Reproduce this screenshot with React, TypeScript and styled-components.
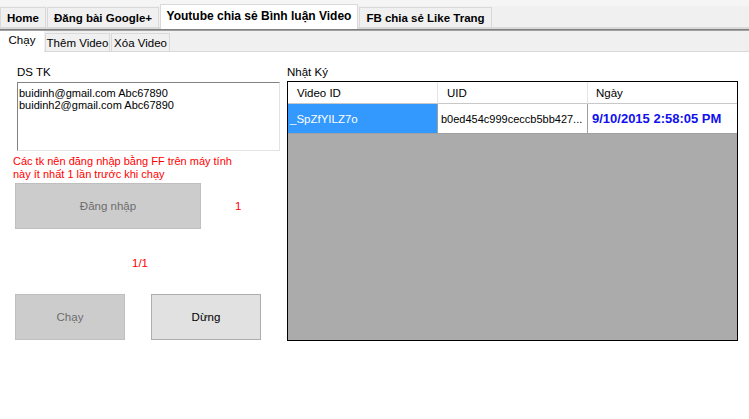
import React from "react";
import styled, { createGlobalStyle } from "styled-components";

const Global = createGlobalStyle`
  html, body { margin: 0; padding: 0; background: #ffffff; }
  body { font-family: "Liberation Sans", Arial, sans-serif; font-size: 11px; color: #000; }
  * { box-sizing: border-box; }
`;

const Page = styled.div`
  width: 749px;
  height: 419px;
  overflow: hidden;
  background: #fff;
`;

const TopStrip = styled.div`
  height: 6px;
  background: #f5f5f5;
`;

const MainTabRow = styled.div`
  height: 23px;
  background: #f0f0f0;
  display: flex;
  align-items: flex-end;
  border-bottom: 2px solid #d9d9d9;
  position: relative;
`;

const MainTab = styled.div<{ $w: number; $active?: boolean }>`
  width: ${(p) => p.$w}px;
  height: ${(p) => (p.$active ? 25 : 20)}px;
  margin-bottom: ${(p) => (p.$active ? -2 : 0)}px;
  background: ${(p) => (p.$active ? "#ffffff" : "#f0f0f0")};
  border: 1px solid #d9d9d9;
  border-bottom: none;
  margin-right: 1px;
  display: flex;
  align-items: center;
  justify-content: center;
  font-weight: bold;
  font-size: ${(p) => (p.$active ? 12 : 11.5)}px;
  padding-bottom: ${(p) => (p.$active ? 3 : 0)}px;
  white-space: nowrap;
  position: relative;
  z-index: ${(p) => (p.$active ? 2 : 1)};
`;

const Divider = styled.div`
  height: 2px;
  border-top: 1px solid #808080;
  border-bottom: 1px solid #a0a0a0;
  position: relative;
  z-index: 3;
`;

const SubTabRow = styled.div`
  height: 21px;
  background: #f0f0f0;
  display: flex;
  align-items: flex-end;
  border-bottom: 1px solid #d9d9d9;
`;

const SubTab = styled.div<{ $w: number; $active?: boolean }>`
  width: ${(p) => p.$w}px;
  height: ${(p) => (p.$active ? 22 : 18)}px;
  margin-bottom: ${(p) => (p.$active ? -1 : 0)}px;
  background: ${(p) => (p.$active ? "#ffffff" : "#f0f0f0")};
  border: 1px solid ${(p) => (p.$active ? "#ffffff" : "#d9d9d9")};
  border-bottom: none;
  margin-right: 1px;
  display: flex;
  align-items: center;
  justify-content: center;
  padding-bottom: ${(p) => (p.$active ? 4 : 0)}px;
  font-size: 11.5px;
  white-space: nowrap;
`;

const Content = styled.div`
  display: flex;
  padding-left: 13px;
`;

const LeftCol = styled.div`
  width: 267px;
  display: flex;
  flex-direction: column;
`;

const RightCol = styled.div`
  margin-left: 7px;
  width: 451px;
  display: flex;
  flex-direction: column;
`;

const Label = styled.div<{ $indent?: number }>`
  margin-top: 13px;
  margin-left: ${(p) => p.$indent ?? 0}px;
  line-height: 14px;
  height: 14px;
  font-size: 11.5px;
`;

const TextBox = styled.div`
  margin-top: 3px;
  margin-left: 4px;
  width: 263px;
  height: 69px;
  border: 1px solid;
  border-color: #828282 #e3e3e3 #e3e3e3 #828282;
  padding: 4px 1px;
  line-height: 12px;
  font-size: 11px;
`;

const Note = styled.div`
  margin-top: 4px;
  color: #ff0000;
  line-height: 13px;
  font-size: 11px;
`;

const ButtonRow = styled.div<{ $top: number; $gap: number }>`
  margin-top: ${(p) => p.$top}px;
  margin-left: 2px;
  display: flex;
  align-items: center;
  gap: ${(p) => p.$gap}px;
`;

const WinButton = styled.div<{ $w: number; $disabled?: boolean }>`
  width: ${(p) => p.$w}px;
  height: 46px;
  background: ${(p) => (p.$disabled ? "#cccccc" : "#e1e1e1")};
  border: 1px solid ${(p) => (p.$disabled ? "#bfbfbf" : "#adadad")};
  color: ${(p) => (p.$disabled ? "#6d6d6d" : "#000")};
  display: flex;
  align-items: center;
  justify-content: center;
  font-size: 11.5px;
  font-weight: normal;
  padding-bottom: 1px;
`;

const Counter = styled.div<{ $top?: number; $indent?: number }>`
  color: #ff0000;
  font-size: 11.5px;
  line-height: 13px;
  margin-top: ${(p) => p.$top ?? 0}px;
  margin-left: ${(p) => p.$indent ?? 0}px;
`;

const Grid = styled.div`
  margin-top: 2px;
  width: 451px;
  height: 260px;
  border: 1px solid #000;
  background: #ababab;
  display: flex;
  flex-direction: column;
`;

const GridRow = styled.div<{ $h: number }>`
  display: grid;
  grid-template-columns: 150px 150px 1fr;
  height: ${(p) => p.$h}px;
`;

const HeadCell = styled.div<{ $pad: number }>`
  background: #fff;
  border-right: 1px solid #e5e5e5;
  border-bottom: 1px solid #c8c8c8;
  display: flex;
  align-items: center;
  padding-left: ${(p) => p.$pad}px;
  font-size: 11.5px;
  &:last-child { border-right: none; }
`;

const Cell = styled.div<{ $pad: number; $selected?: boolean; $strong?: boolean; $size?: number }>`
  background: ${(p) => (p.$selected ? "#3399ff" : "#fff")};
  color: ${(p) => (p.$selected ? "#fff" : p.$strong ? "#1010f0" : "#000")};
  font-weight: ${(p) => (p.$strong ? "bold" : "normal")};
  font-size: ${(p) => p.$size ?? 11.5}px;
  border-right: 1px solid #a0a0a0;
  border-bottom: 1px solid #a0a0a0;
  display: flex;
  align-items: center;
  padding-left: ${(p) => p.$pad}px;
  white-space: nowrap;
  &:last-child { border-right: none; }
`;

export default function App() {
  return (
    <Page>
      <Global />
      <TopStrip />
      <MainTabRow>
        <MainTab $w={46}>Home</MainTab>
        <MainTab $w={112}>Đăng bài Google+</MainTab>
        <MainTab $w={198} $active>Youtube chia sẻ Bình luận Video</MainTab>
        <MainTab $w={133}>FB chia sẻ Like Trang</MainTab>
      </MainTabRow>
      <Divider />
      <SubTabRow>
        <SubTab $w={44} $active>Chạy</SubTab>
        <SubTab $w={65}>Thêm Video</SubTab>
        <SubTab $w={59}>Xóa Video</SubTab>
      </SubTabRow>
      <Content>
        <LeftCol>
          <Label $indent={4}>DS TK</Label>
          <TextBox>
            buidinh@gmail.com Abc67890
            <br />
            buidinh2@gmail.com Abc67890
          </TextBox>
          <Note>
            Các tk nên đăng nhập bằng FF trên máy tính
            <br />
            này ít nhất 1 lần trước khi chạy
          </Note>
          <ButtonRow $top={2} $gap={34}>
            <WinButton $w={186} $disabled>Đăng nhập</WinButton>
            <Counter>1</Counter>
          </ButtonRow>
          <Counter $top={28} $indent={119}>1/1</Counter>
          <ButtonRow $top={24} $gap={26}>
            <WinButton $w={110} $disabled>Chạy</WinButton>
            <WinButton $w={110}>Dừng</WinButton>
          </ButtonRow>
        </LeftCol>
        <RightCol>
          <Label>Nhật Ký</Label>
          <Grid>
            <GridRow $h={22}>
              <HeadCell $pad={9}>Video ID</HeadCell>
              <HeadCell $pad={9}>UID</HeadCell>
              <HeadCell $pad={8}>Ngày</HeadCell>
            </GridRow>
            <GridRow $h={30}>
              <Cell $pad={2} $selected>_SpZfYILZ7o</Cell>
              <Cell $pad={3} $size={11}>b0ed454c999ceccb5bb427...</Cell>
              <Cell $pad={4} $strong $size={13}>9/10/2015 2:58:05 PM</Cell>
            </GridRow>
          </Grid>
        </RightCol>
      </Content>
    </Page>
  );
}
